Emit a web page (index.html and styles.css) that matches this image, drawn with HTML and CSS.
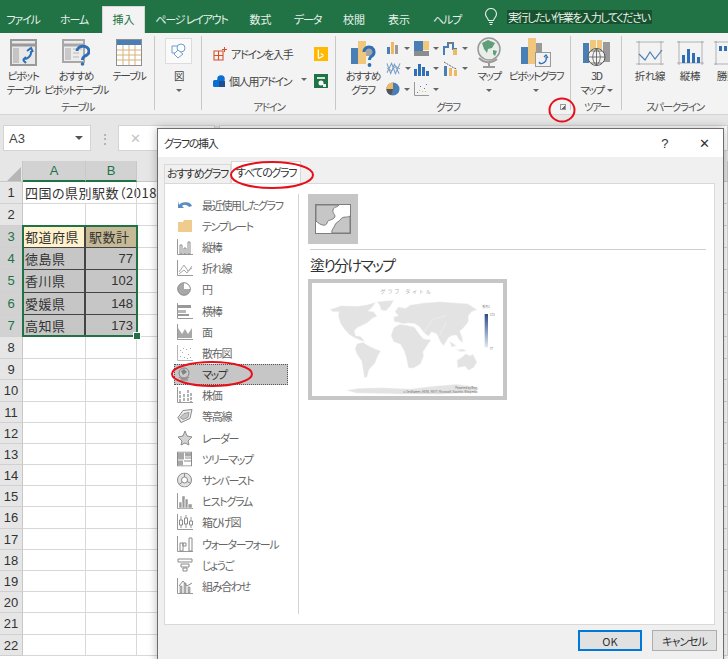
FILE: index.html
```html
<!DOCTYPE html>
<html lang="ja">
<head>
<meta charset="utf-8">
<title>グラフの挿入</title>
<link rel="stylesheet" href="styles.css">
</head>
<body>
<div class="app">
  <nav class="tabs">
    <span class="k">ファイル</span><span class="k">ホーム</span><span class="on">挿入</span><span class="k">ページ レイアウト</span><span>数式</span><span class="k">データ</span><span>校閲</span><span>表示</span><span class="k">ヘルプ</span>
    <div class="tell">
      <svg width="14" height="18" viewBox="0 0 14 18"><path d="M4.500 12.500C4 10 1.500 9 1.500 6a5.500 5.500 0 0 1 11 0c0 3-2.500 4-3 6.500zM5 14.500h4M5.800 16.500h2.400" fill="none" stroke="#e6f0ea" stroke-width="1.100"/></svg>
      <b>実行したい作業を入力してください</b>
    </div>
  </nav>

  <section class="ribbon">
    <div class="group">
      <div class="gbody">
        <div class="big w46"><div class="ico">
          <svg width="27" height="27" viewBox="0 0 27 27"><rect x="1" y="1" width="25" height="25" fill="#e8e8e8" stroke="#9a9a9a" stroke-width="2"/><path d="M2 6h23" stroke="#9a9a9a" stroke-width="3"/><path d="M3 9h6v15H3z" fill="#c4c4c4"/><path d="M13 20a7 7 0 0 0 8-8M17 12l4-3 2 4M13 21l3 3M13 21l3-3" fill="none" stroke="#2f6fb5" stroke-width="2"/></svg>
        </div><span>ピボット<br>テーブル</span></div>
        <div class="big w60"><div class="ico">
          <svg width="28" height="27" viewBox="0 0 28 27"><rect x="1" y="1" width="21" height="22" fill="#ececec" stroke="#a8a8a8" stroke-width="2"/><path d="M2 6h19" stroke="#a8a8a8" stroke-width="3"/><path d="M3 9h6v12H3z" fill="#c8c8c8"/><path d="M11 10h9M11 14h6M11 18h6" stroke="#b5b5b5"/><path d="M15 12a6 5 0 1 1 8 5c-2 1-2.500 2-2.500 4" fill="none" stroke="#2f6fb5" stroke-width="3"/><circle cx="20.500" cy="25" r="1.800" fill="#2f6fb5"/></svg>
        </div><span>おすすめ<br>ピボットテーブル</span></div>
        <div class="big w46"><div class="ico">
          <svg width="26" height="27" viewBox="0 0 26 27"><rect x=".5" y=".5" width="25" height="26" fill="#fff" stroke="#8f8f8f"/><rect x="1" y="1" width="24" height="5" fill="#4a7fb5"/><path d="M1 11h24M1 16h24M1 21h24M7 6v20M13 6v20M19 6v20" stroke="#d8b27a"/></svg>
        </div><span>テーブル</span></div>
      </div>
      <div class="glabel">テーブル</div>
    </div>

    <div class="group">
      <div class="gbody gcenter">
        <div class="big w46"><div class="ico">
          <div class="picbox"><svg width="16" height="16" viewBox="0 0 16 16"><path d="M1 3h8v7H1z" fill="#fff" stroke="#6d9ecf"/><circle cx="10" cy="5" r="4" fill="#fff" stroke="#6d9ecf"/><path d="M8 8l5 4-5 4-4-4z" fill="#fff" stroke="#6d9ecf" transform="translate(-1 -1)"/></svg></div>
        </div><span>図</span><i class="caret"></i></div>
      </div>
      <div class="glabel">&nbsp;</div>
    </div>

    <div class="group">
      <div class="gbody addins">
        <div class="arow">
          <svg width="14" height="14" viewBox="0 0 14 14"><path d="M1 4h9v9H1zM1 8.500h9M5.500 4v9" fill="none" stroke="#d8502a" stroke-width="1.100"/><path d="M11.500 0v5M9 2.500h5" stroke="#d8502a"/></svg>
          <span>アドインを入手</span>
          <svg class="aright" width="14" height="14" viewBox="0 0 14 14"><rect width="14" height="14" fill="#ffb900"/><path d="M5 2.500v8l4-2-2-1-.5-1.500 3 1.200v2.300l-4.500 2.500-1.300-1V2.500z" fill="#fff"/></svg>
        </div>
        <div class="arow">
          <svg width="12" height="12" viewBox="0 0 12 12"><rect x="0" y="5" width="7" height="7" rx="1.500" fill="#0a6fd0"/><circle cx="8" cy="4" r="3.800" fill="#0a6fd0"/><rect x="6" y="6" width="6" height="6" fill="#1d4f91"/></svg>
          <span>個人用アドイン</span><i class="caret side gapc"></i>
          <svg class="aright" width="14" height="14" viewBox="0 0 14 14"><rect width="14" height="14" fill="#217346"/><path d="M3 3h8v2H3z" fill="#cfe6d8"/><circle cx="7" cy="9" r="2.500" fill="#fff"/><path d="M9 10h3v3H9z" fill="#e8f3ec"/></svg>
        </div>
      </div>
      <div class="glabel">アドイン</div>
    </div>

    <div class="group">
      <div class="gbody">
        <div class="big w46 chartrec"><div class="ico">
          <svg width="26" height="30" viewBox="0 0 26 30"><rect x="1" y="10" width="7" height="16" fill="#4a7fb5"/><rect x="8" y="3" width="8" height="23" fill="#f0c77b"/><rect x="16" y="8" width="7" height="10" fill="#a5a5a5"/><path d="M14 14a5 5 0 1 1 8 4c-2 1-2.500 2-2.500 4" fill="none" stroke="#2f6fb5" stroke-width="3"/><circle cx="19.500" cy="27" r="1.900" fill="#2f6fb5"/></svg>
        </div><span>おすすめ<br>グラフ</span></div>
        <div class="smallgrid">
          <div><svg width="14" height="14" viewBox="0 0 14 14"><path d="M1 6h3v7H1z" fill="#4a7fb5"/><path d="M5 1h3v12H5z" fill="#f0b95f"/><path d="M9 4h3v9H9z" fill="#9a9a9a"/></svg><i class="caret"></i></div>
          <div><svg width="15" height="15" viewBox="0 0 15 15"><path d="M0 0h9v10H0z" fill="#4a7fb5"/><path d="M9 0h6v9H9z" fill="#f0c77b"/><path d="M0 10h15v5H0z" fill="#8c8c8c"/></svg><i class="caret"></i></div>
          <div><svg width="15" height="15" viewBox="0 0 15 15"><path d="M1 14V6h4V2h5v6h3v6" fill="none" stroke="#4a7fb5" stroke-width="2"/><path d="M10 8h4v6h-4z" fill="#f0b95f"/><path d="M5 2h5" stroke="#7c7c7c" stroke-width="2"/></svg><i class="caret"></i></div>
          <div><svg width="15" height="15" viewBox="0 0 16 15"><path d="M1 2l4 11 4-10 5 10M1 12l5-10 4 11 5-11" fill="none" stroke="#6d9ecf" stroke-width="1.100"/><path d="M1 7l5 3 4-5 5 3" fill="none" stroke="#999"/></svg><i class="caret"></i></div>
          <div><svg width="15" height="14" viewBox="0 0 15 14"><path d="M0 7h3v7H0zM4 2h3v12H4zM8 5h3v9H8zM12 9h3v5h-3z" fill="#2f6fb5"/></svg><i class="caret"></i></div>
          <div><svg width="15" height="15" viewBox="0 0 15 15"><path d="M1 5h3v10H1z" fill="#4a7fb5"/><path d="M6 7h3v8H6z" fill="#f0b95f"/><path d="M11 9h3v6h-3z" fill="#f0b95f"/><path d="M1 1l5 3 5 3 3 1" fill="none" stroke="#666" stroke-dasharray="2 1"/></svg><i class="caret"></i></div>
          <div><svg width="14" height="14" viewBox="0 0 15 15"><circle cx="7.500" cy="7.500" r="7" fill="#4a7fb5"/><path d="M7.500 7.500V.5a7 7 0 0 0-7 7z" fill="#f0b95f"/><path d="M7.500 7.500H.5a7 7 0 0 0 5 6.700z" fill="#555"/></svg><i class="caret"></i></div>
          <div><svg width="15" height="14" viewBox="0 0 15 14"><path d="M.5 0v13.500H15" fill="none" stroke="#999"/><path d="M3 10h1v1H3zM6 4h1v1H6zM10 6h1v1h-1zM12 2h1v1h-1z" fill="#4a7fb5"/><path d="M5 8h1v1H5zM8 9h1v1H8zM11 9h1v1h-1z" fill="#f0b95f"/></svg><i class="caret"></i></div>
        </div>
        <div class="big w36"><div class="ico">
          <svg width="26" height="33" viewBox="0 0 26 33"><circle cx="13" cy="13" r="11" fill="#e8efe8" stroke="#999" stroke-width="1.500"/><path d="M6 7l6-3 7 3-3 5-4 1-1 4-3-4zM17 14l4 1-2 5-2-2z" fill="#5f9e78"/><path d="M3 22a13 13 0 0 0 18 1M13 26v4M7 31h12" fill="none" stroke="#9a9a9a" stroke-width="2"/></svg>
        </div><span>マップ</span><i class="caret"></i></div>
        <div class="big w58"><div class="ico">
          <svg width="30" height="29" viewBox="0 0 30 29"><rect x="0" y="9" width="7" height="17" fill="#4a7fb5"/><rect x="7" y="0" width="8" height="26" fill="#f0c77b"/><rect x="15" y="5" width="6" height="9" fill="#9a9a9a"/><rect x="14.500" y="14.500" width="15" height="14" fill="#f2f2f2" stroke="#999"/><path d="M18 25a5 5 0 0 0 7-6M23 19l2-2 2 3M18 24l2 2" fill="none" stroke="#2f6fb5" stroke-width="1.300"/></svg>
        </div><span>ピボットグラフ</span><i class="caret"></i></div>
      </div>
      <div class="glabel launch"><span>グラフ</span><i class="launcher"></i></div>
    </div>

    <div class="group">
      <div class="gbody gcenter">
        <div class="big w46"><div class="ico">
          <svg width="27" height="28" viewBox="0 0 27 28"><path d="M0 4h6v20H0z" fill="#4a7fb5"/><path d="M7 1h6v14H7z" fill="#f0c77b"/><path d="M14 1h5v14h-5z" fill="#f0c77b"/><path d="M20 3h7v20h-7z" fill="#9a9a9a"/><circle cx="13.500" cy="18" r="8.500" fill="#f3f3f3" stroke="#555"/><path d="M5 18h17M13.500 9.500v17M8 12h11M8 24h11M13.500 9.500c-5 5-5 12 0 17M13.500 9.500c5 5 5 12 0 17" fill="none" stroke="#555" stroke-width=".8"/></svg>
        </div><span>3D<br>マップ <i class="caret side"></i></span></div>
      </div>
      <div class="glabel">ツアー</div>
    </div>

    <div class="group last">
      <div class="gbody spark">
        <div class="big w42"><div class="ico">
          <svg width="28" height="24" viewBox="0 0 28 24"><path d="M0 1h28M0 23h28M3 0v24M25 0v24" stroke="#8c8c8c" stroke-width=".8" fill="none" opacity=".8"/><path d="M3 13l6 6 5-8 5 7 7-9" fill="none" stroke="#4a7fb5" stroke-width="1.200"/></svg>
        </div><span>折れ線</span></div>
        <div class="big w36"><div class="ico">
          <svg width="27" height="24" viewBox="0 0 27 24"><path d="M0 1h27M0 22h27M2 0v24M25 0v24" stroke="#8c8c8c" stroke-width=".8" fill="none" opacity=".8"/><path d="M5 14h3v8H5zM10 8h3v14h-3zM15 12h3v10h-3zM20 16h3v6h-3z" fill="#2f6fb5"/></svg>
        </div><span>縦棒</span></div>
        <div class="big w36"><div class="ico">
          <svg width="27" height="24" viewBox="0 0 27 24"><path d="M0 1h27M0 23h27M2 0v24" stroke="#8c8c8c" stroke-width=".8" fill="none" opacity=".8"/><path d="M5 5h3v5H5zM10 5h3v5h-3zM15 12h3v5h-3z" fill="#2f6fb5"/><path d="M20 12h3v5h-3zM25 12h3v5h-3z" fill="#d8502a"/></svg>
        </div><span>勝敗</span></div>
      </div>
      <div class="glabel">スパークライン</div>
    </div>
  </section>

  <section class="fbar">
    <div class="namebox"><span>A3</span><i class="caret dark"></i></div>
    <span class="grip">⋮</span>
    <div class="fbtns">✕</div>
    <div class="finput"></div>
  </section>

  <section class="sheet">
    <div class="corner"><i></i></div><div class="ch sel">A</div><div class="ch sel">B</div><div class="ch"></div>
    <div class="rh">1</div><div class="c t1">四国の県別駅数（2018</div><div class="c nb"></div><div class="c"></div>
    <div class="rh">2</div><div class="c"></div><div class="c"></div><div class="c"></div>
    <div class="rh rs">3</div><div class="c h1">都道府県</div><div class="c h2">駅数計</div><div class="c"></div>
    <div class="rh rs">4</div><div class="c d">徳島県</div><div class="c d n">77</div><div class="c"></div>
    <div class="rh rs">5</div><div class="c d">香川県</div><div class="c d n">102</div><div class="c"></div>
    <div class="rh rs">6</div><div class="c d">愛媛県</div><div class="c d n">148</div><div class="c"></div>
    <div class="rh rs">7</div><div class="c d">高知県</div><div class="c d n">173</div><div class="c"></div>
    <div class="rh">8</div><div class="c"></div><div class="c"></div><div class="c"></div>
    <div class="rh">9</div><div class="c"></div><div class="c"></div><div class="c"></div>
    <div class="rh">10</div><div class="c"></div><div class="c"></div><div class="c"></div>
    <div class="rh">11</div><div class="c"></div><div class="c"></div><div class="c"></div>
    <div class="rh">12</div><div class="c"></div><div class="c"></div><div class="c"></div>
    <div class="rh">13</div><div class="c"></div><div class="c"></div><div class="c"></div>
    <div class="rh">14</div><div class="c"></div><div class="c"></div><div class="c"></div>
    <div class="rh">15</div><div class="c"></div><div class="c"></div><div class="c"></div>
    <div class="rh">16</div><div class="c"></div><div class="c"></div><div class="c"></div>
    <div class="rh">17</div><div class="c"></div><div class="c"></div><div class="c"></div>
    <div class="rh">18</div><div class="c"></div><div class="c"></div><div class="c"></div>
    <div class="rh">19</div><div class="c"></div><div class="c"></div><div class="c"></div>
    <div class="rh">20</div><div class="c"></div><div class="c"></div><div class="c"></div>
    <div class="rh">21</div><div class="c"></div><div class="c"></div><div class="c"></div>
    <div class="rh">22</div><div class="c"></div><div class="c"></div><div class="c"></div>
    <div class="selbox"><i></i></div>
  </section>
</div>

<div class="dialog">
  <header class="dtitle"><span>グラフの挿入</span><b class="q">?</b><b class="x">✕</b></header>
  <div class="dtabs"><span class="dt">おすすめグラフ</span><span class="dt act">すべてのグラフ</span></div>
  <div class="panel">
    <ul class="list">
      <li><svg width="16" height="14" viewBox="0 0 16 14"><path d="M2 7a7 5 0 0 1 13 1l-3 1a4 3 0 0 0-7-1l2 2H1V3z" fill="#3f78b5"/></svg>最近使用したグラフ</li>
      <li><svg width="16" height="14" viewBox="0 0 16 14"><path d="M1 3h5l1-2h8v12H1z" fill="#edc27b"/></svg>テンプレート</li>
      <li><svg width="16" height="16" viewBox="0 0 16 16"><path d="M.5 0v15.500H16" fill="none" stroke="#888"/><path d="M3 6h2v9H3zM7 9h2v6H7zM11 3h2v12h-2z" fill="none" stroke="#777"/></svg>縦棒</li>
      <li><svg width="16" height="16" viewBox="0 0 16 16"><path d="M.5 0v15.500H16" fill="none" stroke="#888"/><path d="M2 12l5-7 4 6 4-3M2 14l5-4 3 3 5-7" fill="none" stroke="#999"/></svg>折れ線</li>
      <li><svg width="14" height="14" viewBox="0 0 14 14"><circle cx="7" cy="7" r="6.300" fill="#999" stroke="#777"/><path d="M7 7V1.200a5.800 5.800 0 0 1 5.800 5.800z" fill="#fff"/></svg>円</li>
      <li><svg width="16" height="16" viewBox="0 0 16 16"><path d="M.5 0v15.500H16" fill="none" stroke="#888"/><path d="M1 2h13v3H1z" fill="#888"/><path d="M1 7h8v3H1z" fill="#aaa"/><path d="M1 11h11v2H1z" fill="#888"/></svg>横棒</li>
      <li><svg width="16" height="16" viewBox="0 0 16 16"><path d="M.5 0v15.500H16" fill="none" stroke="#888"/><path d="M1 4l4 6 3-5 3 5 4-6v10H1z" fill="#999"/></svg>面</li>
      <li><svg width="16" height="16" viewBox="0 0 16 16"><path d="M.5 0v15.500H16" fill="none" stroke="#aaa"/><path d="M3 11h1v1H3zM5 7h1v1H5zM7 12h1v1H7zM9 4h1v1H9zM11 9h1v1h-1zM13 3h1v1h-1zM13 12h1v1h-1zM6 3h1v1H6zM10 13h1v1h-1zM3 5h1v1H3z" fill="#999"/></svg>散布図</li>
      <li class="cur"><svg width="14" height="14" viewBox="0 0 14 14"><circle cx="7" cy="6" r="5" fill="#ccc" stroke="#777"/><path d="M4 4l3-2 3 3-4 3z" fill="#777"/><path d="M2 10a7 7 0 0 0 10 0M4 13h7" fill="none" stroke="#777"/></svg>マップ</li>
      <li><svg width="16" height="16" viewBox="0 0 16 16"><path d="M.5 0v15.500H16" fill="none" stroke="#888"/><path d="M3 4v11M7 7v8M11 3v12M14 6v9" stroke="#888" stroke-width="1.500" stroke-dasharray="3 1"/></svg>株価</li>
      <li><svg width="16" height="15" viewBox="0 0 16 15"><path d="M1 9l5-7 9-1-2 9-9 4z" fill="#eee" stroke="#777"/><path d="M3 9l4-4 5-1-1 5-5 2zM1 9l3 5" fill="#bbb" stroke="#777" stroke-width=".8"/></svg>等高線</li>
      <li><svg width="16" height="16" viewBox="0 0 16 16"><path d="M8 1l2 5 5 1-4 4 1 4-4-2-4 2 1-4-4-4 5-1z" fill="#ccc" stroke="#777"/></svg>レーダー</li>
      <li><svg width="15" height="15" viewBox="0 0 15 15"><rect x=".5" y=".5" width="14" height="14" fill="#fff" stroke="#777"/><path d="M1 1h6v7H1zM8 1h6v4H8zM1 9h5v5H1z" fill="#999"/><path d="M8 6h6v1H8zM7 9h7v1H7z" fill="#777"/></svg>ツリーマップ</li>
      <li><svg width="15" height="15" viewBox="0 0 15 15"><circle cx="7.500" cy="7.500" r="7" fill="#ddd" stroke="#777"/><circle cx="7.500" cy="7.500" r="3" fill="#fff" stroke="#777"/><path d="M7.500 .5v4M2 12l3.500-2.500M10 9l4 2" stroke="#777"/></svg>サンバースト</li>
      <li><svg width="16" height="16" viewBox="0 0 16 16"><path d="M.5 0v15.500H16" fill="none" stroke="#888"/><path d="M2 9h3v6H2zM5 3h3v12H5zM8 6h3v9H8zM11 11h4v4h-4z" fill="#888" stroke="#fff" stroke-width=".5"/></svg>ヒストグラム</li>
      <li><svg width="16" height="16" viewBox="0 0 16 16"><path d="M.5 0v15.500H16" fill="none" stroke="#888"/><path d="M4 2v12M9 1v13M14 3v11" stroke="#888"/><path d="M2.500 6h3v5h-3zM7.500 4h3v6h-3zM12.500 7h3v4h-3z" fill="#fff" stroke="#777"/></svg>箱ひげ図</li>
      <li><svg width="16" height="16" viewBox="0 0 16 16"><path d="M.5 0v15.500H16" fill="none" stroke="#888"/><path d="M3 7h3v8H3zM6 7h3v3H6zM12 2h3v13h-3z" fill="#fff" stroke="#777"/></svg>ウォーターフォール</li>
      <li><svg width="16" height="14" viewBox="0 0 16 14"><path d="M1 1h14v3H1zM4 6h8v3H4zM6 10h4v3H6z" fill="#fff" stroke="#777"/></svg>じょうご</li>
      <li><svg width="16" height="16" viewBox="0 0 16 16"><path d="M.5 0v15.500H16" fill="none" stroke="#888"/><path d="M3 8h2v7H3zM7 5h2v10H7zM11 9h2v6h-2z" fill="#aaa" stroke="#777" stroke-width=".6"/><path d="M2 8l4-5 4 5 5-3" fill="none" stroke="#777"/></svg>組み合わせ</li>
    </ul>
    <div class="pane">
      <div class="tile"><svg width="36" height="30" viewBox="0 0 36 30"><rect x=".5" y=".5" width="35" height="29" fill="#fff" stroke="#7d7d7d"/><path d="M1 1h23c-2 3-5 1-6 5s4 5 1 8-6 1-7 5-7 2-11-2z" fill="#c6c6c6" stroke="#7d7d7d"/><path d="M35 12c-3 2-7 0-9 3s-5 3-6 6-4 5-3 8h18z" fill="#c6c6c6" stroke="#7d7d7d"/></svg></div>
      <hr class="rule">
      <h2 class="ctitle">塗り分けマップ</h2>
      <div class="preview">
        <svg width="191" height="113" viewBox="37 312 573 339">
          <text x="322" y="342" class="mt" text-anchor="middle">グラフ タイトル</text>
          <g fill="#e3e3e3" stroke="#f7f7f7" stroke-width="1.200">
            <path d="M90 392L125 380L175 382L200 378L228 370L215 388L205 396L222 398L232 412L218 418L205 430L190 438L172 446L164 456L168 470L182 472L196 488L182 484L164 476L148 466L132 448L122 432L116 412L118 398L100 398Z"/>
            <path d="M232 368L282 364L272 382L258 396L244 392L240 378Z"/>
            <path d="M172 494L190 490L206 500L222 508L243 516L234 532L226 552L208 572L202 594L194 596L190 570L186 546L172 526L166 510Z"/>
            <path d="M286 398L296 384L318 388L332 378L372 372L420 368L470 372L504 374L532 392L516 398L506 410L506 428L492 446L480 456L488 476L490 492L478 482L470 468L456 470L446 476L432 500L422 488L412 466L396 458L386 472L372 460L360 444L346 434L326 432L310 434L296 430L284 428L282 414L296 410Z"/>
            <path d="M282 446L300 436L318 438L344 444L358 464L372 480L394 482L382 500L370 518L372 532L362 556L340 568L326 566L320 536L314 516L302 496L282 488L274 470Z"/>
            <path d="M472 544L488 534L498 524L510 530L520 526L532 550L522 566L506 574L496 562L474 566Z"/>
            <path d="M470 512L490 510L500 516L484 518ZM450 486L470 500L456 504Z"/>
            <path d="M140 634L180 628L250 626L330 630L400 622L470 616L530 624L530 640L420 646L300 645L170 642Z"/>
            <path d="M330 432M360 444L340 438M296 430L318 440M372 460L400 420L440 410M420 470L440 430" fill="none" stroke="#fafafa"/>
          </g>
          <text x="548" y="386" class="lg">系列1</text>
          <defs><linearGradient id="lg" x1="0" y1="0" x2="0" y2="1"><stop offset="0" stop-color="#2a4a88"/><stop offset="1" stop-color="#dfe8f5"/></linearGradient></defs>
          <rect x="555" y="405" width="10" height="100" fill="url(#lg)"/>
          <text x="570" y="410" class="lg">173</text>
          <text x="570" y="513" class="lg">77</text>
          <text x="533" y="631" class="ft" text-anchor="end">Powered by Bing</text>
          <text x="533" y="643" class="ft" text-anchor="end">© GeoNames, HERE, MSFT, Microsoft, NavInfo, Wikipedia</text>
        </svg>
      </div>
    </div>
  </div>
  <footer class="dfoot"><button class="btn ok">OK</button><button class="btn">キャンセル</button></footer>
</div>

<svg class="mark m1" width="28" height="26" viewBox="0 0 28 26"><ellipse cx="14" cy="13" rx="12.500" ry="11.500"/></svg>
<svg class="mark m2" width="86" height="30" viewBox="0 0 86 30"><ellipse cx="43" cy="15" rx="41" ry="13"/></svg>
<svg class="mark m3" width="84" height="28" viewBox="0 0 84 28"><ellipse cx="42" cy="14" rx="40" ry="12"/></svg>
</body>
</html>
```

FILE: styles.css
```css
* { box-sizing: border-box; }
html, body { margin: 0; height: 100%; }
body {
  width: 728px; height: 659px; overflow: hidden; position: relative;
  font-family: "Noto Sans CJK JP", "Noto Sans", sans-serif;
  font-feature-settings: "palt";
  color: #444; background: #fff;
}
.app { display: flex; flex-direction: column; height: 659px; }

/* tab strip */
.tabs {
  height: 33px; background: #217346; color: #e9f2ec; font-size: 11px;
  display: grid; grid-template-columns: 46px 56px 43px 93px 45px 49px 44px 46px 50px 1fr;
  align-items: end; flex: none;
}
.tabs > span { height: 27px; line-height: 26px; text-align: center; white-space: nowrap; }
.tabs > span.k { letter-spacing: -1.200px; }
.tabs > span.on { background: #f3f3f3; color: #217346; border: 1px solid #d6d6d6; border-bottom: 0; line-height: 25px; }
.tell { height: 33px; display: flex; align-items: center; gap: 9px; padding-left: 12px; }
.tell b { font-weight: 400; background: #17522f; color: #e9f2ec; height: 14px; line-height: 14px; font-size: 11px; letter-spacing: -1.400px; padding: 0 2px 0 1px; white-space: nowrap; }

/* ribbon */
.ribbon {
  height: 82px; flex: none; background: #f3f3f3; border-bottom: 1px solid #d4d4d4;
  display: grid; grid-template-columns: 155px 47px 134px 235px 51px 1fr; padding-top: 3px;
  font-size: 10.500px; color: #444; letter-spacing: -1.300px;
}
.group {
  height: 78px; display: flex; flex-direction: column; min-width: 0;
  background: linear-gradient(#c8c8c8, #c8c8c8) right top / 1px 74px no-repeat;
}
.group.last { background: none; }
.gbody { flex: 1; display: flex; min-height: 0; }
.gcenter { justify-content: center; }
.glabel { height: 15px; line-height: 15px; text-align: center; white-space: nowrap; font-size: 10.500px; color: #555; }
.launch { display: grid; grid-template-columns: 1fr auto; align-items: center; }
.launcher { width: 6px; height: 6px; border: 1px solid #999; background: linear-gradient(135deg, transparent 55%, #666 55%); margin: 0 5px 0 0; }
.big { display: flex; flex-direction: column; align-items: center; text-align: center; line-height: 14px; white-space: nowrap; flex: none; }
.ico { height: 33px; display: flex; align-items: center; justify-content: center; }
.w36 { width: 36px; } .w42 { width: 42px; } .w46 { width: 46px; } .w58 { width: 58px; } .w60 { width: 60px; }
.chartrec { margin-left: 4px; }
.caret { display: inline-block; width: 0; height: 0; border: 3px solid transparent; border-top: 3px solid #666; border-bottom: 0; margin-top: 6px; }
.caret.side { margin: 0 0 2px 2px; vertical-align: middle; }
.caret.gapc { margin-left: 6px; }
.caret.dark { border-width: 4px 4px 0; border-top-color: #555; margin: 0; }
.picbox { width: 27px; height: 26px; background: #fafafa; border: 1px solid #dcdcdc; display: flex; align-items: center; justify-content: center; margin-bottom: 3px; }

.addins { flex-direction: column; padding: 4px 8px 0 11px; }
.arow { height: 27px; display: flex; align-items: center; gap: 4px; white-space: nowrap; font-size: 11px; letter-spacing: -1.300px; }
.arow .aright { margin-left: auto; }

.smallgrid { display: grid; grid-template-columns: 28px 29px 28px; grid-auto-rows: 20.500px; align-content: start; margin-top: 2px; }
.smallgrid > div { display: flex; align-items: center; gap: 4px; }
.smallgrid .caret { margin: 0; }
.spark { padding-left: 7px; letter-spacing: -.3px; }
.spark .big:nth-child(2), .spark .big:nth-child(3) { margin-left: 1px; }

/* formula bar */
.fbar { height: 46px; flex: none; background: #e6e6e6; display: flex; align-items: flex-start; padding-top: 10px; }
.namebox { width: 88px; height: 26px; margin-left: 3px; background: #fff; border: 1px solid #d4d4d4; display: flex; align-items: center; justify-content: space-between; padding: 0 7px 0 5px; font-size: 13px; color: #444; font-family: "Liberation Sans", sans-serif; }
.grip { width: 27px; text-align: center; color: #999; font-size: 12px; line-height: 26px; }
.fbtns { width: 97px; height: 26px; background: #fff; border: 1px solid #d4d4d4; color: #c4c4c4; font-size: 13px; line-height: 24px; padding-left: 11px; }
.finput { flex: 1; height: 26px; margin-left: 4px; background: #fff; border: 1px solid #d4d4d4; }

/* sheet */
.sheet {
  flex: 1; min-height: 0; overflow: hidden; display: grid; position: relative;
  grid-template-columns: 23px 63px 51px 1fr;
  grid-template-rows: 21px 22px 22px repeat(6, 22.200px) repeat(14, 21.200px);
  background: #fff; font-size: 13px; color: #333;
}
.corner { background: #e6e6e6; border-right: 1px solid #c8c8c8; border-bottom: 1px solid #c8c8c8; overflow: hidden; }
.corner i { display: block; width: 0; height: 0; border-style: solid; border-width: 0 0 14px 14px; border-color: transparent transparent #b6b6b6 transparent; margin: 6px 0 0 7px; }
.ch { background: #e6e6e6; border-right: 1px solid #c8c8c8; border-bottom: 1px solid #c8c8c8; text-align: center; line-height: 20px; font-family: "Liberation Sans", sans-serif; font-size: 13px; }
.ch.sel { background: #d2d2d2; color: #217346; border-bottom: 2px solid #217346; }
.rh { background: #e6e6e6; border-right: 1px solid #c8c8c8; border-bottom: 1px solid #d0d0d0; text-align: center; font-family: "Liberation Sans", sans-serif; font-size: 13px; line-height: 21px; color: #333; }
.rh.rs { background: #d2d2d2; color: #217346; }
.c { border-right: 1px solid #d8d8d8; border-bottom: 1px solid #d8d8d8; padding: 0 2px; line-height: 21px; white-space: nowrap; min-width: 0; }
.t1 { border: 0; border-bottom: 1px solid #d8d8d8; letter-spacing: .5px; overflow: visible; font-size: 13px; }
.nb { border-bottom: 1px solid #d8d8d8; }
.h1 { background: #fff2cc; border-right: 2px solid #444; border-bottom: 1px solid #444; letter-spacing: .5px; }
.h2 { background: #c6b995; border-right: 1px solid #444; border-bottom: 1px solid #444; letter-spacing: .5px; padding-left: 3px; }
.d { background: #c6c6c6; border-right: 2px solid #444; border-bottom: 1px solid #444; letter-spacing: .5px; }
.d.n { border-right: 1px solid #444; text-align: right; font-family: "Liberation Sans", sans-serif; padding-right: 3px; letter-spacing: 0; }
.selbox { grid-column: 2 / 4; grid-row: 4 / 9; position: absolute; inset: -1px -1px 0 -1px; border: 2px solid #217346; pointer-events: none; }
.selbox i { position: absolute; right: -4px; bottom: -4px; width: 6px; height: 6px; background: #217346; outline: 1px solid #fff; }

/* dialog */
.dialog {
  position: absolute; left: 157px; top: 128px; width: 567px; height: 540px;
  background: #f0f0f0; border: 1px solid #6d6d6d; box-shadow: 0 0 9px rgba(0,0,0,.28);
  display: flex; flex-direction: column; font-size: 11px; color: #555; letter-spacing: -1.300px;
}
.dtitle { height: 28px; flex: none; background: #fff; display: flex; align-items: center; padding-left: 6px; font-size: 11px; color: #333; }
.dtitle span { flex: 1; }
.dtitle b { font-weight: 400; font-family: "Liberation Sans", sans-serif; color: #333; }
.q { font-size: 13px; margin-right: 32px; }
.x { font-size: 13px; margin-right: 14px; }
.dtabs { height: 26px; flex: none; display: flex; align-items: flex-end; padding-left: 6px; font-size: 11px; color: #333; }
.dt { height: 19px; width: 67px; text-align: center; line-height: 17px; background: #f0f0f0; border: 1px solid #d9d9d9; border-bottom: 0; white-space: nowrap; }
.dt.act { height: 22px; width: 70px; background: #fff; line-height: 20px; }
.panel { margin: 0 8px 0 6px; height: 442px; flex: none; background: #fff; border: 1px solid #d9d9d9; display: flex; }
.list { list-style: none; margin: 10px 0 0; padding: 0 0 0 9px; width: 134px; height: 420px; border-right: 1px solid #d4d4d4; flex: none; }
.list li { height: 21.200px; width: 114px; display: flex; align-items: center; padding-left: 28px; color: #666; white-space: nowrap; position: relative; }
.list li svg { position: absolute; left: 3px; top: 50%; transform: translateY(-50%); opacity: .85; }
.list li.cur { background: #c6c6c6; outline: 1px dotted #555; outline-offset: -1px; color: #333; }
.pane { flex: 1; padding: 10px 8px 0 9px; min-width: 0; letter-spacing: 0; }
.tile { width: 50px; height: 50px; background: #c6c6c6; display: flex; align-items: center; justify-content: center; }
.rule { border: 0; border-top: 1px solid #cfcfcf; margin: 5px 0 0 2px; }
.ctitle { font-size: 15px; font-weight: 400; color: #333; margin: 4px 0 3px 2px; line-height: 22px; letter-spacing: -1.700px; }
.preview { width: 199px; height: 121px; border: 4px solid #c6c6c6; background: #fff; }
.preview svg { display: block; }
.mt { font-size: 15px; fill: #aaa; letter-spacing: 8px; }
.lg { font-size: 9px; fill: #777; }
.ft { font-size: 8.500px; fill: #666; }
.dfoot { flex: 1; display: flex; justify-content: flex-end; gap: 10px; padding: 5px 6px 0 0; }
.btn { width: 64px; height: 21px; background: #e1e1e1; border: 1px solid #adadad; font: inherit; font-size: 11px; color: #333; padding: 0; letter-spacing: -1px; }
.btn.ok { border: 2px solid #0078d7; letter-spacing: 0; }
.btn:last-child { width: 65px; }

/* annotation rings */
.mark { position: absolute; fill: none; stroke: #e5101a; stroke-width: 2; }
.m1 { left: 548px; top: 97px; }
.m2 { left: 229px; top: 160px; }
.m3 { left: 170px; top: 360px; }
```
